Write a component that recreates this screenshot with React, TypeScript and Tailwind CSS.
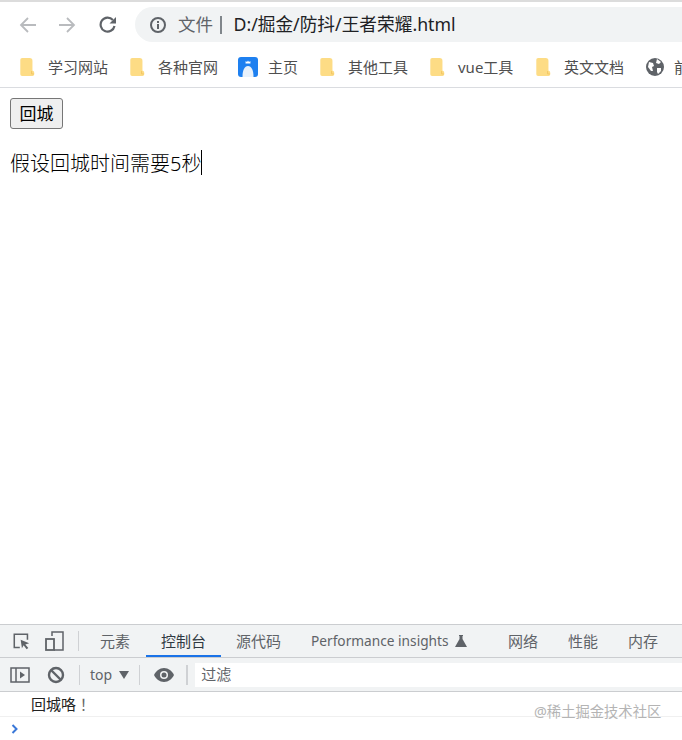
import React from 'react';

const FONT = "font-['Noto_Sans','Noto_Sans_CJK_SC',sans-serif]";

const Folder: React.FC = () => (
  <svg width="15" height="18" viewBox="0 0 16 20" className="shrink-0">
    <path d="M2 0h8.500a3 3 0 0 1 3 3v11h-.2a2.500 2.500 0 0 1 2.200 2.500V18a2 2 0 0 1-2 2H2a2 2 0 0 1-2-2V2a2 2 0 0 1 2-2z" fill="#fddc85" />
    <path d="M12.500 14.500v3.200h2.600" fill="none" stroke="#f2c562" strokeWidth="1" />
  </svg>
);

const Bookmark: React.FC<{ label: string; icon?: React.ReactNode; width: string; iconBox?: string }> = ({
  label,
  icon,
  width,
  iconBox = 'w-[28px]',
}) => (
  <div className={`flex items-center shrink-0 ${width}`}>
    <div className={`${iconBox} flex shrink-0`}>{icon ?? <Folder />}</div>
    <span className="text-[15px] text-[#4f4f4f] whitespace-nowrap">{label}</span>
  </div>
);

const Logo = (
  <svg width="20" height="20" viewBox="0 0 20 20" className="shrink-0">
    <rect width="20" height="20" rx="3" fill="#1e80f0" />
    <path d="M4.500 20c0-7 2-11 5.500-11s5.500 4 5.500 11z" fill="#e8f1fb" />
    <path d="M7.500 6.500l.2-2.500 1.300 1 1-1.500 1 1.500 1.300-1 .2 2.500z" fill="#fff" />
  </svg>
);

const Globe = (
  <svg width="18" height="18" viewBox="0 0 18 18">
    <circle cx="9" cy="9" r="9" fill="#5f6368" />
    <path d="M3 4l4 1 1 3-2 1 1 4-2 0-3-4zM11 1l4 3-2 2-3-1zM11 10l4 0 0 3-3 3-1-2z" fill="#fff" />
  </svg>
);

const Divider: React.FC<{ x?: string }> = ({ x = 'mx-[7px]' }) => (
  <div className={`w-px h-[20px] ${x} bg-[#cfd1d4] shrink-0`} />
);

const tabs = [
  { label: '元素', width: 'w-[67px] pl-[21px] justify-start' },
  { label: '控制台', width: 'w-[75px] justify-center', active: true },
  { label: '源代码', width: 'w-[75px] justify-center' },
];

const App: React.FC = () => {
  return (
    <div className={`w-[682px] h-[740px] flex flex-col overflow-hidden bg-white relative ${FONT}`}>
      {/* Browser chrome */}
      <div className="h-[2px] bg-[#dcdcdc] shrink-0" />
      <div className="h-[45px] flex items-center shrink-0">
        <div className="w-[135px] flex items-center pl-[19px] shrink-0">
          <svg width="18" height="18" viewBox="0 0 18 18" fill="none" stroke="#b9bbbe" strokeWidth="1.800">
            <path d="M17 9H2M9 2L2 9l7 7" />
          </svg>
          <svg width="18" height="18" viewBox="0 0 18 18" fill="none" stroke="#b9bbbe" strokeWidth="1.800" className="ml-[21px]">
            <path d="M1 9h15M9 2l7 7-7 7" />
          </svg>
          <svg width="18" height="18" viewBox="0 0 18 18" fill="none" stroke="#5f6368" strokeWidth="2.200" className="ml-[23px]">
            <path d="M15.500 10a7 7 0 1 1-1.600-6" />
            <path d="M17 1v6.500h-6.500z" fill="#5f6368" stroke="none" />
          </svg>
        </div>
        <div className="flex-1 h-[35px] bg-[#f1f3f4] rounded-l-[18px] flex items-center pl-[14px]">
          <svg width="18" height="18" viewBox="0 0 18 18" className="shrink-0">
            <circle cx="9" cy="9" r="7" fill="none" stroke="#5f6368" strokeWidth="2" />
            <rect x="8" y="8" width="2" height="5" fill="#5f6368" />
            <rect x="8" y="5" width="2" height="2" fill="#5f6368" />
          </svg>
          <span className="ml-[11px] text-[17.500px] text-[#5f6368]">文件</span>
          <div className="w-[1.500px] h-[18px] bg-[#80868b] ml-[7px] mr-[12px]" />
          <span className="text-[17.700px] text-[#202124] whitespace-nowrap">D:/掘金/防抖/王者荣耀.html</span>
        </div>
      </div>
      <div className="h-[40px] flex items-center pl-[20px] border-b border-[#dadce0] shrink-0 box-content">
        <Bookmark label="学习网站" width="w-[110px]" />
        <Bookmark label="各种官网" width="w-[108px]" />
        <Bookmark label="主页" icon={Logo} width="w-[82px]" iconBox="w-[30px]" />
        <Bookmark label="其他工具" width="w-[110px]" />
        <Bookmark label="vue工具" width="w-[106px]" />
        <Bookmark label="英文文档" width="w-[110px]" />
        <Bookmark label="前端" icon={Globe} width="w-[50px]" />
      </div>

      {/* Page */}
      <div className="flex-1 pl-[10px] pt-[10px] text-black">
        <button className="h-[31px] w-[53px] bg-[#efefef] border border-[#767676] rounded-[3px] text-[17px] leading-none flex items-center justify-center">
          回城
        </button>
        <div className="mt-[20px] flex items-center h-[30px] text-[20px] font-light">
          <span>假设回城时间需要5秒</span>
          <span className="w-px h-[25px] mb-[4px] bg-black" />
        </div>
      </div>

      {/* Devtools */}
      <div className="shrink-0 h-[116px] flex flex-col">
        <div className="h-[34px] bg-[#f1f3f4] border-t border-[#cbcdd0] border-b flex items-center pl-[13px] shrink-0 box-border">
          <svg width="17" height="17" viewBox="0 0 20 20" fill="none" className="shrink-0">
            <path d="M8 17H1.500V1.500H17V8" stroke="#5f6368" strokeWidth="1.800" />
            <path d="M9 8l10 4-4.500 1.500 3.500 4-2 1.500-3.500-4.500-2 3.500z" fill="#5f6368" />
          </svg>
          <svg width="20" height="20" viewBox="0 0 20 20" fill="none" className="ml-[15px] shrink-0">
            <path d="M7 5V1h11v18H9" stroke="#5f6368" strokeWidth="1.500" />
            <rect x="1" y="8" width="8" height="11" stroke="#5f6368" strokeWidth="1.800" />
          </svg>
          <Divider x="ml-[13px] mr-0" />
          {tabs.map(t => (
            <div
              key={t.label}
              className={`${t.width} h-[32px] flex items-center text-[15px] shrink-0 ${
                t.active ? 'text-[#303942] border-b-[2px] border-[#1a73e8] pt-[2px]' : 'text-[#5f6368]'
              }`}
            >
              {t.label}
            </div>
          ))}
          <div className="ml-[15px] flex items-center text-[13.700px] text-[#5f6368] whitespace-nowrap shrink-0 w-[182px]">
            Performance insights
            <svg width="12" height="12" viewBox="0 0 12 12" className="ml-[6px]">
              <path d="M4 0h4v1H7.500v3L12 12H0l4.500-8V1H4z" fill="#5f6368" />
            </svg>
          </div>
          <div className="w-[60px] text-center text-[15px] text-[#5f6368] shrink-0">网络</div>
          <div className="w-[60px] text-center text-[15px] text-[#5f6368] shrink-0">性能</div>
          <div className="w-[60px] text-center text-[15px] text-[#5f6368] shrink-0">内存</div>
        </div>
        <div className="h-[34px] bg-[#f1f3f4] border-b border-[#cbcdd0] flex items-center pl-[10px] shrink-0">
          <svg width="20" height="16" viewBox="0 0 20 16" fill="none" className="shrink-0">
            <rect x="1" y="1" width="18" height="14" stroke="#5f6368" strokeWidth="1.500" />
            <path d="M6 1v14" stroke="#5f6368" strokeWidth="1.500" />
            <path d="M10 4.500l5 3.500-5 3.500z" fill="#5f6368" />
          </svg>
          <svg width="18" height="18" viewBox="0 0 18 18" fill="none" stroke="#5f6368" strokeWidth="2.400" className="ml-[17px] shrink-0">
            <circle cx="9" cy="9" r="7" />
            <path d="M4 4l10 10" />
          </svg>
          <Divider x="ml-[14px] mr-[10px]" />
          <span className="text-[14px] text-[#5f6368]">top</span>
          <span className="ml-[7px] w-0 h-0 border-x-[5px] border-x-transparent border-t-[8px] border-t-[#5f6368]" />
          <Divider x="ml-[10px] mr-[14px]" />
          <svg width="20" height="14" viewBox="0 0 20 14" className="shrink-0">
            <path d="M10 0C5.500 0 2 3 0 7c2 4 5.500 7 10 7s8-3 10-7c-2-4-5.500-7-10-7z" fill="#5f6368" />
            <circle cx="10" cy="7" r="4" fill="#f1f3f4" />
            <circle cx="10" cy="7" r="2.500" fill="#5f6368" />
          </svg>
          <div className="w-[2px] h-[20px] bg-[#cfd1d4] ml-[12px] mr-[7px] shrink-0" />
          <div className="flex-1 h-[24px] bg-white flex items-center pl-[6px] text-[15px] text-[#5f6368]">过滤</div>
        </div>
        <div className="h-[25px] border-b border-[#f0f0f0] flex items-center pl-[31px] text-[15px] text-[#222] shrink-0">
          回城咯<span className="font-['Noto_Sans_CJK_TC',sans-serif] text-[#666]">！</span>
        </div>
        <div className="flex-1 flex items-center pl-[11px]">
          <svg width="8" height="10" viewBox="0 0 8 10" fill="none" stroke="#3a78d8" strokeWidth="2">
            <path d="M1.500 1l4 4-4 4" />
          </svg>
        </div>
      </div>

      <span className="absolute left-[534px] top-[701px] text-[14.300px] text-[#b4b4b4] whitespace-nowrap">@稀土掘金技术社区</span>
    </div>
  );
};

export default App;
